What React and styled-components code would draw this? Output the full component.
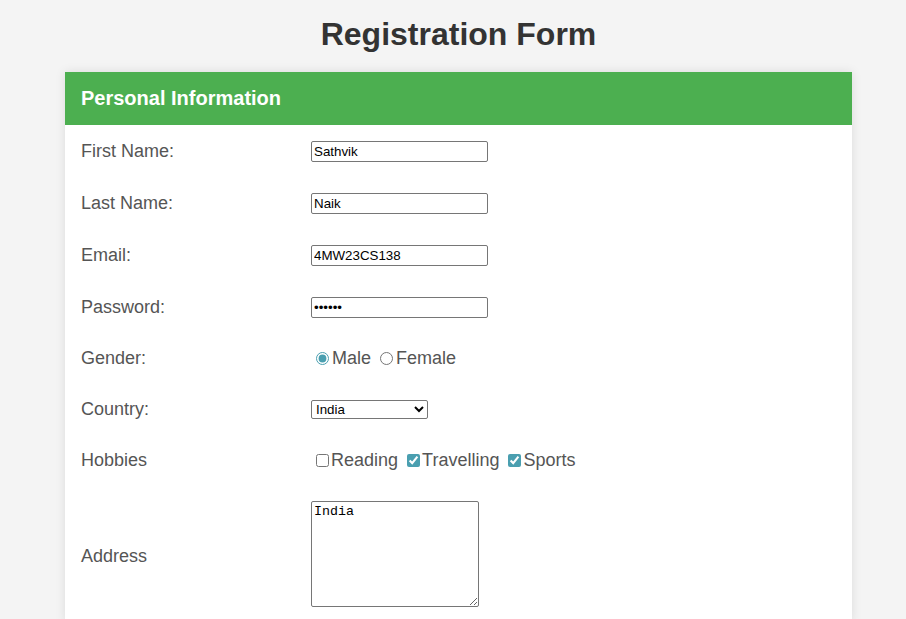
import React from "react";
import styled, { createGlobalStyle } from "styled-components";

const GlobalStyle = createGlobalStyle`
  body {
    margin: 0;
    background: #f4f4f4;
    font-family: "Liberation Sans", Arial, sans-serif;
  }
`;

const Page = styled.div`
  padding: 0 54px 0 65px;
`;

const Title = styled.h1`
  margin: 16px 0 19px;
  font-size: 32px;
  line-height: 37px;
  font-weight: bold;
  text-align: center;
  color: #333;
`;

const Card = styled.section`
  background: #fff;
  box-shadow: 0 0 10px rgba(0, 0, 0, 0.1);
`;

const Header = styled.h2`
  margin: 0;
  height: 53px;
  padding: 0 16px;
  display: flex;
  align-items: center;
  background: #4caf50;
  color: #fff;
  font-size: 20px;
  font-weight: bold;
`;

const Row = styled.div`
  display: grid;
  grid-template-columns: 230px 1fr;
  align-items: center;
  height: ${(props) => props.$h || 52}px;
  padding: ${(props) => props.$pad || "0"} 16px;
  box-sizing: ${(props) => (props.$pad ? "content-box" : "border-box")};
`;

const Label = styled.label`
  font-size: 18px;
  color: #555;
`;

const TextInput = styled.input`
  width: 177px;
  height: 21px;
  box-sizing: border-box;
  padding: 1px 2px;
  border: 1px solid #767676;
  border-radius: 2px;
  font-family: "Liberation Sans", Arial, sans-serif;
  font-size: 13.33px;
  color: #000;
`;

const Choices = styled.div`
  display: flex;
  align-items: center;
  font-size: 18px;
  color: #555;
`;

const Choice = styled.label`
  display: flex;
  align-items: center;
  margin-right: ${(props) => props.$gap || 6}px;

  input {
    margin: 0 ${(props) => (props.$box ? 2 : 3)}px 0 5px;
    width: 13px;
    height: 13px;
    accent-color: #4a9fb0;
  }
`;

const Select = styled.select`
  width: 117px;
  height: 19px;
  font-family: "Liberation Sans", Arial, sans-serif;
  font-size: 13.33px;
  border: 1px solid #767676;
  border-radius: 2px;
  color: #000;
  background: #fff;
`;

const TextArea = styled.textarea`
  width: 168px;
  height: 106px;
  box-sizing: border-box;
  padding: 2px;
  border: 1px solid #767676;
  border-radius: 2px;
  font-family: "Liberation Mono", monospace;
  font-size: 13.33px;
  color: #000;
`;

export default function App() {
  return (
    <>
      <GlobalStyle />
      <Page>
        <Title>Registration Form</Title>
        <Card>
          <Header>Personal Information</Header>
          <Row>
            <Label>First Name:</Label>
            <div><TextInput type="text" defaultValue="Sathvik" /></div>
          </Row>
          <Row>
            <Label>Last Name:</Label>
            <div><TextInput type="text" defaultValue="Naik" /></div>
          </Row>
          <Row>
            <Label>Email:</Label>
            <div><TextInput type="text" defaultValue="4MW23CS138" /></div>
          </Row>
          <Row>
            <Label>Password:</Label>
            <div><TextInput type="password" defaultValue="secret" /></div>
          </Row>
          <Row $h={50}>
            <Label>Gender:</Label>
            <Choices>
              <Choice $gap={4}>
                <input type="radio" name="gender" defaultChecked />
                Male
              </Choice>
              <Choice $gap={4}>
                <input type="radio" name="gender" />
                Female
              </Choice>
            </Choices>
          </Row>
          <Row>
            <Label>Country:</Label>
            <div>
              <Select defaultValue="India">
                <option>India</option>
                <option>USA</option>
                <option>UK</option>
              </Select>
            </div>
          </Row>
          <Row $h={51}>
            <Label>Hobbies</Label>
            <Choices>
              <Choice $box $gap={4}>
                <input type="checkbox" />
                Reading
              </Choice>
              <Choice $box $gap={4}>
                <input type="checkbox" defaultChecked />
                Travelling
              </Choice>
              <Choice $box $gap={4}>
                <input type="checkbox" defaultChecked />
                Sports
              </Choice>
            </Choices>
          </Row>
          <Row $h={106} $pad="15px">
            <Label>Address</Label>
            <div><TextArea defaultValue="India" /></div>
          </Row>
        </Card>
      </Page>
    </>
  );
}
